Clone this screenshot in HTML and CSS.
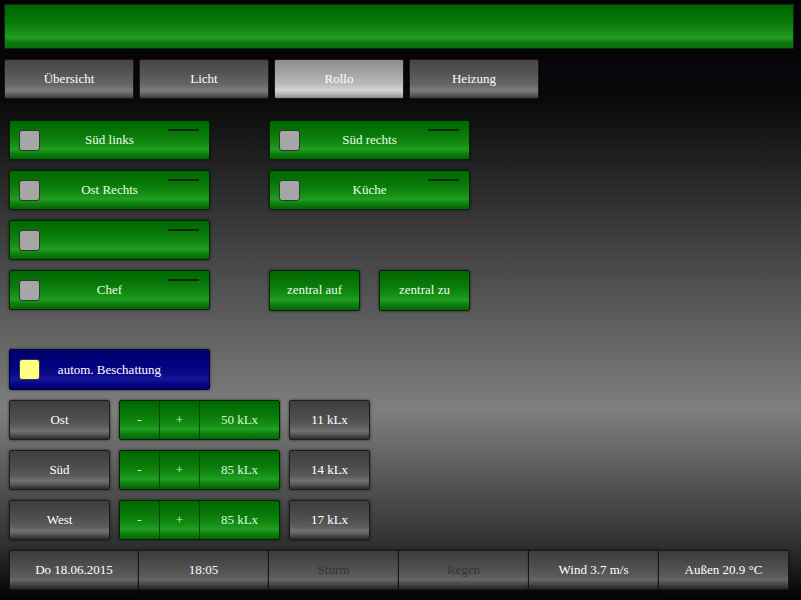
FILE: index.html
```html
<!DOCTYPE html>
<html lang="de">
<head>
<meta charset="utf-8">
<title>Rollo</title>
<link rel="stylesheet" href="styles.css">
</head>
<body>
<div class="page">
  <div class="header"></div>
  <nav class="tabs">
    <div class="tab">Übersicht</div>
    <div class="tab">Licht</div>
    <div class="tab active">Rollo</div>
    <div class="tab">Heizung</div>
  </nav>
  <main class="content">
    <div class="blinds">
      <div class="gbtn"><span class="chk"></span><span class="lbl">Süd links</span><span class="pos"></span></div>
      <div class="gbtn"><span class="chk"></span><span class="lbl">Süd rechts</span><span class="pos"></span></div>
      <div class="gbtn"><span class="chk"></span><span class="lbl">Ost Rechts</span><span class="pos"></span></div>
      <div class="gbtn"><span class="chk"></span><span class="lbl">Küche</span><span class="pos"></span></div>
      <div class="gbtn"><span class="chk"></span><span class="lbl"></span><span class="pos"></span></div>
      <div class="spacer"></div>
      <div class="gbtn"><span class="chk"></span><span class="lbl">Chef</span><span class="pos"></span></div>
      <div class="central">
        <div class="sbtn">zentral auf</div>
        <div class="sbtn">zentral zu</div>
      </div>
    </div>
    <div class="bbtn"><span class="chk yellow"></span><span class="lbl">autom. Beschattung</span><span></span></div>
    <div class="sun">
      <div class="srow">
        <div class="gray">Ost</div>
        <div class="seg"><span>-</span><span>+</span><span>50 kLx</span></div>
        <div class="gray">11 kLx</div>
      </div>
      <div class="srow">
        <div class="gray">Süd</div>
        <div class="seg"><span>-</span><span>+</span><span>85 kLx</span></div>
        <div class="gray">14 kLx</div>
      </div>
      <div class="srow">
        <div class="gray">West</div>
        <div class="seg"><span>-</span><span>+</span><span>85 kLx</span></div>
        <div class="gray">17 kLx</div>
      </div>
    </div>
  </main>
  <footer class="status">
    <div class="cell">Do 18.06.2015</div>
    <div class="cell">18:05</div>
    <div class="cell dim">Sturm</div>
    <div class="cell dim">Regen</div>
    <div class="cell">Wind 3.7 m/s</div>
    <div class="cell">Außen 20.9 °C</div>
  </footer>
</div>
</body>
</html>
```

FILE: styles.css
```css
* { box-sizing: border-box; }
html, body { margin: 0; padding: 0; }
body {
  width: 801px;
  height: 600px;
  overflow: hidden;
  font-family: "Liberation Serif", serif;
  font-size: 13px;
  line-height: 15px;
  color: #ffffff;
  background: linear-gradient(to bottom,
    #040006 0px, #07040a 50px, #0a0a0a 100px,
    #7f7f7f 410px, #2e2e2e 548px, #0a0a0a 590px, #050505 600px);
}
.page {
  display: flex;
  flex-direction: column;
  height: 600px;
  font-family: "Liberation Serif", serif;
}
.header {
  margin: 4px 7px 0 4px;
  height: 45px;
  border: 1px solid #003000;
  background: linear-gradient(to bottom,
    #006400 0%, #087808 40%, #1c921c 68%, #22a022 76%, #0e7a0e 86%, #0a6a0a 100%);
}
.tabs {
  display: flex;
  gap: 5px;
  margin: 10px 0 0 4px;
}
.tab {
  width: 130px;
  height: 40px;
  display: flex;
  align-items: center;
  justify-content: center;
  padding-bottom: 1px;
  border: 1px solid #1a1a1a;
  border-radius: 2px;
  background: linear-gradient(to bottom,
    #454545 0%, #575757 40%, #666666 65%, #7c7c7c 78%, #6e6e6e 86%, #3c3c3c 100%);
  box-shadow: 0 0 3px rgba(0,0,0,0.8);
}
.tab.active {
  background: linear-gradient(to bottom,
    #8c8c8c 0%, #a8a8a8 40%, #bcbcbc 65%, #d4d4d4 78%, #c4c4c4 86%, #8a8a8a 100%);
}
.content {
  display: flex;
  flex-direction: column;
  padding-left: 9px;
  margin-top: 21px;
}
.blinds {
  display: grid;
  grid-template-columns: 201px 201px;
  column-gap: 59px;
  row-gap: 10px;
}
.gbtn, .bbtn {
  height: 40px;
  display: grid;
  grid-template-columns: 41px 1fr 41px;
  align-items: center;
  padding-bottom: 1px;
  border: 1px solid #002800;
  border-radius: 2px;
  color: #eaffea;
  box-shadow: 0 0 3px rgba(0,0,0,0.6);
  background: linear-gradient(to bottom,
    #006600 0%, #0a7c0a 40%, #179217 65%, #22a022 74%, #118411 84%, #066206 100%);
}
.lbl { text-align: center; white-space: nowrap; }
.chk {
  width: 21px;
  height: 21px;
  margin-left: 9px;
  margin-top: 1px;
  background: #a6a6a6;
  border: 1px solid #2c3a2c;
  border-radius: 3px;
}
.chk.yellow {
  background: #ffff80;
  border-color: #303060;
}
.pos {
  align-self: start;
  width: 31px;
  height: 2px;
  margin-top: 8px;
  background: #062806;
}
.central {
  display: flex;
  gap: 19px;
}
.sbtn {
  width: 91px;
  height: 41px;
  display: flex;
  align-items: center;
  justify-content: center;
  padding-bottom: 2px;
  border: 1px solid #002800;
  border-radius: 2px;
  color: #eaffea;
  box-shadow: 0 0 3px rgba(0,0,0,0.6);
  background: linear-gradient(to bottom,
    #006600 0%, #0a7c0a 40%, #179217 65%, #22a022 74%, #118411 84%, #066206 100%);
}
.bbtn {
  width: 201px;
  margin-top: 38px;
  height: 41px;
  color: #ffffff;
  border-color: #000040;
  background: linear-gradient(to bottom,
    #00006e 0%, #02027e 40%, #0c0c8c 65%, #16169a 74%, #08088a 84%, #000070 100%);
}
.sun {
  display: flex;
  flex-direction: column;
  gap: 10px;
  margin-top: 10px;
}
.srow {
  display: flex;
  gap: 9px;
  height: 40px;
}
.gray {
  width: 101px;
  display: flex;
  align-items: center;
  justify-content: center;
  padding-bottom: 1px;
  border: 1px solid #1c1c1c;
  border-radius: 2px;
  box-shadow: 0 0 3px rgba(0,0,0,0.6);
  background: linear-gradient(to bottom,
    #3e3e3e 0%, #4c4c4c 40%, #5a5a5a 65%, #717171 78%, #5e5e5e 86%, #2c2c2c 100%);
}
.srow .gray:last-child { width: 81px; }
.seg {
  width: 161px;
  display: grid;
  grid-template-columns: 39px 40px 1fr;
  border: 1px solid #002800;
  border-radius: 2px;
  box-shadow: 0 0 3px rgba(0,0,0,0.6);
  color: #d8f8d8;
  background: linear-gradient(to bottom,
    #006600 0%, #0a7c0a 40%, #179217 65%, #22a022 74%, #118411 84%, #066206 100%);
}
.seg span {
  display: flex;
  align-items: center;
  justify-content: center;
  padding-bottom: 1px;
}
.seg span + span { border-left: 1px solid #024402; }
.status {
  display: flex;
  margin: 10px 0 0 9px;
  height: 40px;
}
.cell {
  width: 130px;
  display: flex;
  align-items: center;
  justify-content: center;
  padding-bottom: 1px;
  border: 1px solid #1a1a1a;
  border-left-width: 0;
  background: linear-gradient(to bottom,
    #3c3c3c 0%, #4e4e4e 40%, #5a5a5a 65%, #666666 76%, #4a4a4a 86%, #262626 100%);
  box-shadow: 0 0 3px rgba(0,0,0,0.6);
}
.cell:first-child { border-left-width: 1px; border-radius: 2px 0 0 2px; }
.cell:last-child { border-radius: 0 2px 2px 0; }
.cell.dim { color: #343434; }
```
